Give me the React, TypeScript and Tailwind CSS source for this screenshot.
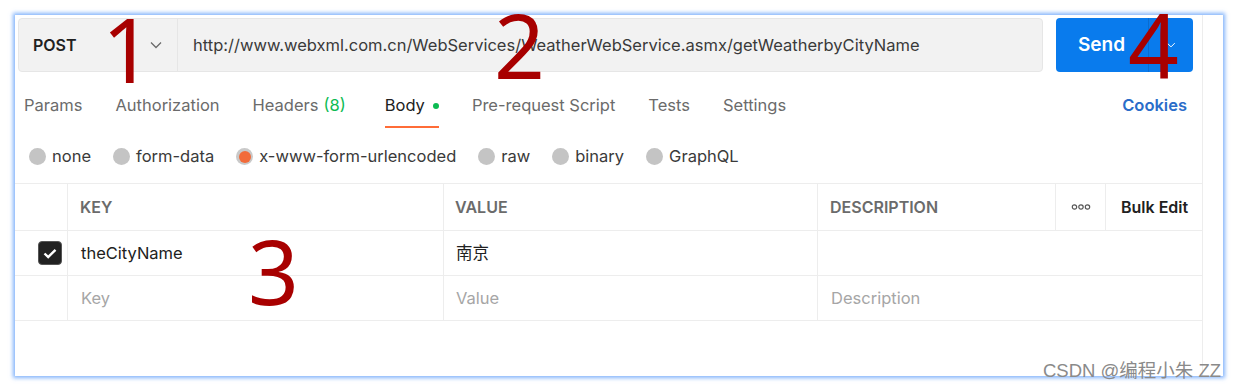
import React from 'react';

const tabs = [
  { label: 'Params', extra: '' },
  { label: 'Authorization', extra: '' },
  { label: 'Headers', count: '(8)', extra: '' },
  { label: 'Body', active: true, extra: 'ml-[6px]' },
  { label: 'Pre-request Script', extra: '' },
  { label: 'Tests', extra: '' },
  { label: 'Settings', extra: '' },
];

const bodyTypes = ['none', 'form-data', 'x-www-form-urlencoded', 'raw', 'binary', 'GraphQL'];

function Chevron({ className }: { className?: string }) {
  return (
    <svg className={className} width="12" height="8" viewBox="0 0 12 8" fill="none">
      <path d="M1 1.5L6 6.5L11 1.5" stroke="currentColor" strokeWidth="1.3" />
    </svg>
  );
}

// red callout digits drawn over the screenshot
function Mark({ n, className }: { n: string; className: string }) {
  return (
    <span
      className={`absolute text-[89px] leading-none text-[#a80000] ${className}`}
      style={{ fontFamily: '"Noto Sans", sans-serif' }}
    >
      {n}
    </span>
  );
}

export default function App() {
  return (
    <div
      className="relative h-[391px] w-[1238px] bg-white text-[#212121]"
      style={{ fontFamily: 'Inter, "Noto Sans CJK SC", sans-serif' }}
    >
      <div className="ml-[15px] pt-[15px]">
        <div className="relative flex h-[361px] w-[1208px] bg-white shadow-[0_0_4px_2px_rgba(90,155,250,0.75)]">
          <div className="flex w-[1188px] flex-col border-r border-[#ededed]">
            {/* request bar */}
            <div className="ml-[3px] mt-[3px] flex h-[54px] items-stretch">
              <div className="flex w-[1025px] rounded border border-[#e6e6e6] bg-[#f2f2f2]">
                <div className="flex w-[159px] items-center justify-between border-r border-[#e6e6e6] pl-[14px] pr-[15px]">
                  <span className="text-[16px] font-semibold text-[#212121]">POST</span>
                  <Chevron className="text-[#6b6b6b]" />
                </div>
                <div className="flex items-center pl-[15px] text-[16.5px] text-[#3a3a3a]">
                  http://www.webxml.com.cn/WebServices/WeatherWebService.asmx/getWeatherbyCityName
                </div>
              </div>
              <div className="ml-[13px] flex w-[137px] items-center rounded bg-[#097bed] text-white">
                <span className="pl-[22px] text-[19px] font-semibold">Send</span>
                <span className="ml-auto h-full w-px bg-[#0a6cd0]" />
                <span className="flex w-[44px] justify-center">
                  <Chevron className="h-[6px] w-[10px] text-white" />
                </span>
              </div>
            </div>

            {/* tabs */}
            <div className="mt-[14px] flex h-[42px] items-stretch gap-[33px] pl-[9px] pr-[15px]">
              {tabs.map((t) => (
                <div key={t.label} className={`relative flex items-center pb-[3px] ${t.extra}`}>
                  <span className={`text-[16.5px] ${t.active ? 'text-[#212121]' : 'text-[#6b6b6b]'}`}>
                    {t.label}
                    {t.count && <span className="ml-[5px] text-[#0cbb52]">{t.count}</span>}
                  </span>
                  {t.active && <span className="ml-[8px] h-[6px] w-[6px] rounded-full bg-[#0cbb52]" />}
                  {t.active && <span className="absolute bottom-0 left-0 right-0 h-[2px] bg-[#ff6c37]" />}
                </div>
              ))}
              <span className="ml-auto flex items-center pb-[3px] text-[16.5px] font-semibold text-[#2a6dc9]">
                Cookies
              </span>
            </div>

            {/* body type radios */}
            <div className="flex h-[55px] items-center gap-[22px] pl-[14px] pt-[2px]">
              {bodyTypes.map((b) => (
                <label key={b} className="flex items-center gap-[6px] text-[16.5px] text-[#3a3a3a]">
                  {b === 'x-www-form-urlencoded' ? (
                    <span className="flex h-[17px] w-[17px] items-center justify-center rounded-full bg-[#c9c9c9]">
                      <span className="h-[12px] w-[12px] rounded-full bg-[#f26b3a]" />
                    </span>
                  ) : (
                    <span className="h-[17px] w-[17px] rounded-full bg-[#c4c4c4]" />
                  )}
                  {b}
                </label>
              ))}
            </div>

            {/* key/value table */}
            <div className="border-t border-[#ededed] text-[16.5px]">
              <div className="flex h-[47px] border-b border-[#ededed] text-[16px] font-semibold text-[#6b6b6b]">
                <div className="w-[53px] border-r border-[#ededed]" />
                <div className="flex w-[376px] items-center border-r border-[#ededed] pl-[12px]">KEY</div>
                <div className="flex w-[374px] items-center border-r border-[#ededed] pl-[11px]">VALUE</div>
                <div className="flex w-[238px] items-center border-r border-[#ededed] pl-[12px]">DESCRIPTION</div>
                <div className="flex w-[50px] items-center justify-center border-r border-[#ededed]">
                  <svg width="20" height="6" viewBox="0 0 20 6" fill="none" stroke="#555" strokeWidth="1.2">
                    <circle cx="3.5" cy="3" r="2.2" />
                    <circle cx="10" cy="3" r="2.2" />
                    <circle cx="16.5" cy="3" r="2.2" />
                  </svg>
                </div>
                <div className="flex flex-1 items-center pl-[15px] text-[#212121]">Bulk Edit</div>
              </div>
              <div className="flex h-[45px] border-b border-[#ededed] text-[#212121]">
                <div className="flex w-[53px] items-center border-r border-[#ededed] pl-[23px]">
                  <span className="flex h-[24px] w-[24px] items-center justify-center rounded-[4px] border border-[#555] bg-[#212121]">
                    <svg width="14" height="11" viewBox="0 0 14 11" fill="none">
                      <path d="M1.5 5.5L5.2 9L12.5 1.8" stroke="white" strokeWidth="2.4" />
                    </svg>
                  </span>
                </div>
                <div className="flex w-[376px] items-center border-r border-[#ededed] pl-[13px]">theCityName</div>
                <div className="flex w-[374px] items-center border-r border-[#ededed] pl-[12px]">南京</div>
                <div className="flex-1" />
              </div>
              <div className="flex h-[45px] border-b border-[#ededed] text-[#a6a6a6]">
                <div className="w-[53px] border-r border-[#ededed]" />
                <div className="flex w-[376px] items-center border-r border-[#ededed] pl-[13px]">Key</div>
                <div className="flex w-[374px] items-center border-r border-[#ededed] pl-[12px]">Value</div>
                <div className="flex flex-1 items-center pl-[13px]">Description</div>
              </div>
            </div>
          </div>
        </div>
      </div>

      <Mark n="1" className="left-[102px] top-[4px]" />
      <Mark n="2" className="left-[494px] top-[0px]" />
      <Mark n="3" className="left-[248px] top-[226px]" />
      <Mark n="4" className="left-[1128px] top-[0px]" />

      <span
        className="absolute left-[1043px] top-[360px] text-[18.5px] leading-[22px] text-[#8a8a8a]"
        style={{ fontFamily: '"Liberation Sans", "Noto Sans CJK SC", sans-serif' }}
      >
        CSDN @编程小朱 ZZ
      </span>
    </div>
  );
}
